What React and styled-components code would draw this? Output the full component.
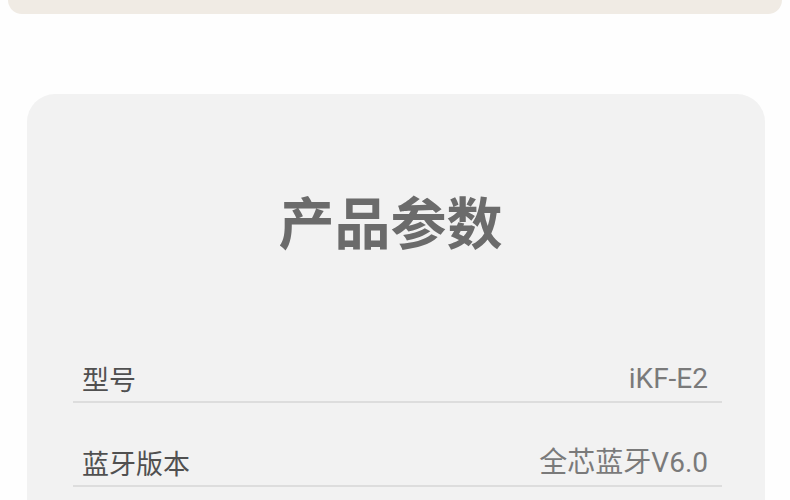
import React from "react";
import styled, { createGlobalStyle } from "styled-components";

const Global = createGlobalStyle`
  html, body { margin: 0; padding: 0; background: #fefefe; }
  body { font-family: Roboto, "Noto Sans CJK SC", sans-serif; }
  * { box-sizing: border-box; }
`;

const Page = styled.div`
  width: 790px;
  height: 500px;
  overflow: hidden;
  display: flex;
  flex-direction: column;
`;

const TopCard = styled.div`
  margin: 0 8px;
  height: 14px;
  background: #f0ebe4;
  border-radius: 0 0 30px 30px;
  flex-shrink: 0;
`;

const ParamCard = styled.section`
  margin: 80px 0 0 27px;
  width: 738px;
  flex-shrink: 0;
  background: #f2f2f2;
  border-radius: 28px 28px 0 0;
  padding: 98px 43px 40px 46px;
  display: flex;
  flex-direction: column;
`;

const Title = styled.h2`
  margin: 0 0 71px;
  padding-right: 14px;
  text-align: center;
  font-family: "Noto Sans CJK SC", sans-serif;
  font-size: 56px;
  line-height: 56px;
  font-weight: 700;
  color: #6b6b6b;
`;

const Row = styled.div`
  height: 84px;
  display: flex;
  justify-content: space-between;
  align-items: flex-end;
  padding: 0 14px 9px 9px;
  border-bottom: 2px solid #dddddd;
  line-height: 26px;
`;

const Label = styled.span`
  font-family: "Noto Sans CJK SC", sans-serif;
  font-size: 27px;
  color: #505050;
`;

const Value = styled.span`
  font-family: Roboto, "Noto Sans CJK SC", sans-serif;
  font-size: 28px;
  color: #7a7a7a;
`;

const params = [
  ["型号", "iKF-E2"],
  ["蓝牙版本", "全芯蓝牙V6.0"],
];

export default function App() {
  return (
    <>
      <Global />
      <Page>
        <TopCard />
        <ParamCard>
          <Title>产品参数</Title>
          {params.map(([k, v]) => (
            <Row key={k}>
              <Label>{k}</Label>
              <Value>{v}</Value>
            </Row>
          ))}
        </ParamCard>
      </Page>
    </>
  );
}
